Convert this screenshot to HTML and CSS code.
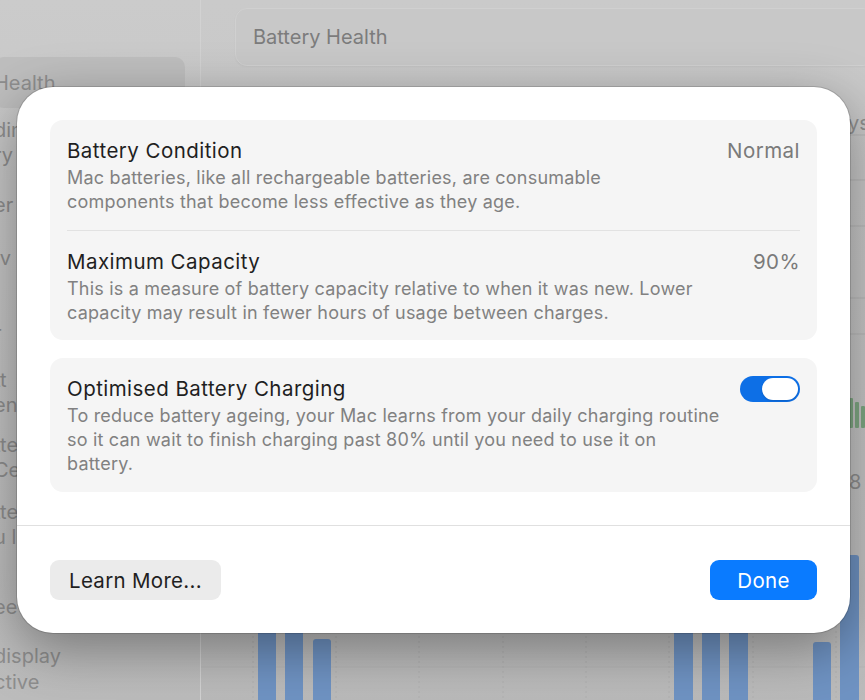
FILE: index.html
```html
<!DOCTYPE html>
<html lang="en">
<head>
<meta charset="utf-8">
<title>Battery Health</title>
<link rel="stylesheet" href="styles.css">
</head>
<body>
<div class="app">
  <aside class="sidebar">
    <div class="side-item selected">Health</div>
    <div class="side-item">din<br>ry</div>
    <div class="side-item">er</div>
    <div class="side-item">&nbsp;v</div>
    <div class="side-item">r</div>
    <div class="side-item">tt<br>en</div>
    <div class="side-item">tte<br>Ce</div>
    <div class="side-item">tte<br>u l</div>
    <div class="side-item">ee</div>
    <div class="side-item">display<br>ctive</div>
  </aside>
  <main class="content">
    <div class="header">Battery Health</div>
    <svg class="chart" width="665" height="640" viewBox="0 0 665 640">
      <text x="647" y="64" class="axis">ys</text>
      <g class="hline">
        <line x1="600" y1="69" x2="665" y2="69"/>
        <line x1="600" y1="114" x2="665" y2="114"/>
        <line x1="600" y1="160" x2="665" y2="160"/>
        <line x1="600" y1="232" x2="665" y2="232"/>
        <line x1="600" y1="268" x2="665" y2="268"/>
        <line x1="0" y1="601" x2="665" y2="601"/>
      </g>
      <g class="vline">
        <line x1="52" y1="480" x2="52" y2="640"/>
        <line x1="135" y1="480" x2="135" y2="640"/>
        <line x1="218" y1="480" x2="218" y2="640"/>
        <line x1="302" y1="480" x2="302" y2="640"/>
        <line x1="385" y1="480" x2="385" y2="640"/>
        <line x1="468" y1="480" x2="468" y2="640"/>
        <line x1="552" y1="480" x2="552" y2="640"/>
        <line x1="635" y1="480" x2="635" y2="640"/>
      </g>
      <g class="green">
        <rect x="648" y="332" width="4" height="30" rx="1"/>
        <rect x="654" y="336" width="4" height="26" rx="1"/>
        <rect x="660" y="340" width="4" height="22" rx="1"/>
      </g>
      <text x="648" y="423" class="axis">8</text>
      <g class="blue">
        <rect x="57" y="540" width="18" height="110" rx="3"/>
        <rect x="84" y="540" width="18" height="110" rx="3"/>
        <rect x="112" y="573" width="18" height="80" rx="3"/>
        <rect x="473" y="540" width="19" height="110" rx="3"/>
        <rect x="501" y="540" width="18" height="110" rx="3"/>
        <rect x="528" y="540" width="19" height="110" rx="3"/>
        <rect x="612" y="576" width="18" height="80" rx="3"/>
        <rect x="639" y="489" width="19" height="160" rx="3"/>
      </g>
    </svg>
  </main>
</div>

<div class="modal">
  <div class="card">
    <div class="row">
      <div class="row-text">
        <div class="title">Battery Condition</div>
        <div class="desc">Mac batteries, like all rechargeable batteries, are consumable<br>components that become less effective as they age.</div>
      </div>
      <div class="value">Normal</div>
    </div>
    <div class="row">
      <div class="row-text">
        <div class="title">Maximum Capacity</div>
        <div class="desc">This is a measure of battery capacity relative to when it was new. Lower<br>capacity may result in fewer hours of usage between charges.</div>
      </div>
      <div class="value">90%</div>
    </div>
  </div>
  <div class="card">
    <div class="row">
      <div class="row-text">
        <div class="title">Optimised Battery Charging</div>
        <div class="desc">To reduce battery ageing, your Mac learns from your daily charging routine<br>so it can wait to finish charging past 80% until you need to use it on<br>battery.</div>
      </div>
      <div class="toggle"><span class="knob"></span></div>
    </div>
  </div>
  <div class="footer">
    <button class="btn btn-secondary">Learn More...</button>
    <button class="btn btn-primary">Done</button>
  </div>
</div>
</body>
</html>
```
FILE: styles.css
```css
* { box-sizing: border-box; }

html, body {
  margin: 0;
  padding: 0;
}

body {
  width: 865px;
  height: 700px;
  overflow: hidden;
  position: relative;
  background: #c9c9c9;
  font-family: Inter, "Liberation Sans", sans-serif;
  -webkit-font-smoothing: antialiased;
}

/* ---------- dimmed background window ---------- */
.app {
  display: flex;
  width: 865px;
  height: 700px;
  overflow: hidden;
}

.sidebar {
  width: 201px;
  flex: none;
  background: linear-gradient(#cbcbcb, #c2c2c2 60%, #bcbcbc);
  border-right: 1px solid #d2d2d2;
  padding-top: 57px;
  display: flex;
  flex-direction: column;
  color: #8e8e8e;
  font-size: 20px;
  line-height: 25px;
  overflow: hidden;
}

.side-item {
  margin-left: -6px;
  width: 191px;
  white-space: nowrap;
}

.side-item.selected {
  background: #bebebe;
  border-radius: 10px;
  height: 51px;
  padding: 14px 0 0;
}

.side-item:nth-child(2) { margin-top: 10px; }
.side-item:nth-child(3) { margin-top: 25px; }
.side-item:nth-child(4) { margin-top: 28px; }
.side-item:nth-child(5) { margin-top: 50px; }
.side-item:nth-child(6) { margin-top: 22px; }
.side-item:nth-child(7) { margin-top: 15px; }
.side-item:nth-child(8) { margin-top: 17px; }
.side-item:nth-child(9) { margin-top: 45px; }
.side-item:nth-child(10) { margin-top: 23px; line-height: 26px; }

.content {
  flex: 1;
  display: flex;
  flex-direction: column;
  overflow: hidden;
  background: linear-gradient(#cacaca, #c4c4c4 80%, #bababa);
}

.header {
  margin: 8px -10px 0 34px;
  height: 58px;
  flex: none;
  border-radius: 12px;
  background: #c8c8c8;
  border: 1px solid #d0d0d0;
  box-shadow: 0 1px 2px rgba(0,0,0,0.04);
  color: #7c7c7c;
  font-size: 20px;
  display: flex;
  align-items: center;
  padding-left: 17px;
}

.chart { display: block; flex: none; }
.chart .axis { font-family: Inter, "Liberation Sans", sans-serif; font-size: 20px; fill: #8f8f8f; }
.chart .hline line { stroke: #b5b5b5; stroke-width: 1; }
.chart .vline line { stroke: #b0b0b0; stroke-width: 1; stroke-dasharray: 2 3; }
.chart .green rect { fill: #7fa883; }
.chart .blue rect { fill: #6f93c3; }

/* ---------- modal sheet ---------- */
.modal {
  position: absolute;
  left: 17px;
  top: 87px;
  width: 833px;
  height: 546px;
  background: #ffffff;
  border-radius: 36px;
  box-shadow: 0 0 0 1px rgba(0,0,0,0.14), 0 16px 55px rgba(0,0,0,0.38);
  padding: 33px 33px 0;
  display: flex;
  flex-direction: column;
  gap: 18px;
}

.card {
  background: #f5f5f5;
  border-radius: 13px;
  padding: 0 17px;
}

.row {
  display: flex;
  justify-content: space-between;
  align-items: flex-start;
  padding: 19px 0 16px;
}

.row + .row {
  border-top: 1px solid #e2e2e2;
  padding-top: 19px;
  padding-bottom: 15px;
}

.card:last-of-type .row { padding: 19px 0 15px; }

.title {
  font-size: 20.5px;
  line-height: 24px;
  letter-spacing: 0.45px;
  color: #1f1f1f;
  margin-bottom: 3px;
}

.desc {
  font-size: 18px;
  line-height: 24px;
  letter-spacing: 0.2px;
  color: #818181;
}

.value {
  font-size: 20.5px;
  line-height: 24px;
  letter-spacing: 0.45px;
  color: #7a7a7a;
}

.toggle {
  width: 60px;
  height: 26px;
  margin-top: -1px;
  border-radius: 13px;
  background: #0d6fe6;
  display: flex;
  align-items: center;
  justify-content: flex-end;
  padding: 2px;
}

.knob {
  width: 36px;
  height: 22px;
  border-radius: 11px;
  background: #ffffff;
  box-shadow: 0 1px 2px rgba(0,0,0,0.15);
}

.footer {
  margin: 15px -33px 0;
  border-top: 1px solid #e0e0e0;
  padding: 34px 33px 0;
  display: flex;
  justify-content: space-between;
}

.btn {
  border: none;
  height: 40px;
  border-radius: 9px;
  font-family: Inter, "Liberation Sans", sans-serif;
  font-size: 20.5px;
  letter-spacing: 0.3px;
  padding: 0;
}

.btn-secondary {
  width: 171px;
  background: #ebebeb;
  color: #1f1f1f;
}

.btn-primary {
  width: 107px;
  background: #0a7bff;
  color: #ffffff;
}
```
